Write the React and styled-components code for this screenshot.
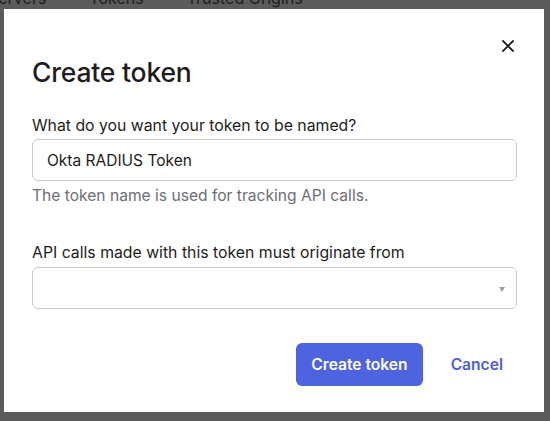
import React from "react";
import styled, { createGlobalStyle } from "styled-components";

const Global = createGlobalStyle`
  html, body { margin: 0; padding: 0; width: 550px; height: 421px; overflow: hidden; }
  body { font-family: Inter, "Noto Sans", sans-serif; background: #ffffff; }
`;

const Page = styled.div`
  position: relative;
  width: 550px;
  height: 421px;
  background: #ffffff;
  overflow: hidden;
`;

const TabRow = styled.div`
  display: flex;
  gap: 43px;
  margin-top: -12px;
  margin-left: -12px;
  font-size: 16px;
  color: #1d1d21;
`;

const Tab = styled.span``;

const Overlay = styled.div`
  position: absolute;
  inset: 0;
  background: rgba(28, 28, 28, 0.72);
  display: flex;
  align-items: flex-start;
  justify-content: flex-start;
  padding: 9px 0 0 4px;
  box-sizing: border-box;
`;

const Modal = styled.div`
  position: relative;
  width: 540px;
  height: 403px;
  background: #ffffff;
  box-sizing: border-box;
  padding: 47px 27px 0 28px;
  display: flex;
  flex-direction: column;
`;

const Close = styled.button`
  position: absolute;
  top: 29px;
  right: 28px;
  width: 16px;
  height: 16px;
  padding: 0;
  border: none;
  background: none;
  display: flex;
  align-items: center;
  justify-content: center;
`;

const Title = styled.h1`
  margin: 0;
  font-size: 26.5px;
  font-weight: 500;
  color: #1d1d21;
  line-height: 32px;
  letter-spacing: -0.2px;
`;

const Field = styled.div`
  display: flex;
  flex-direction: column;
  margin-top: ${(p) => p.$mt}px;
`;

const Label = styled.label`
  font-size: 15.8px;
  line-height: 20px;
  color: #1d1d21;
  margin-bottom: ${(p) => p.$gap}px;
`;

const Input = styled.div`
  height: 42px;
  box-sizing: border-box;
  border: 1px solid #c9c9cd;
  border-radius: 6px;
  padding: 0 14px;
  display: flex;
  align-items: center;
  font-size: 15.5px;
  color: #1d1d21;
`;

const SelectBox = styled(Input)`
  justify-content: flex-end;
  padding-right: 11px;
`;

const Caret = styled.span`
  width: 0;
  height: 0;
  border-left: 3.5px solid transparent;
  border-right: 3.5px solid transparent;
  border-top: 5px solid #a0a0a6;
  margin-top: 2px;
`;

const Help = styled.div`
  font-size: 15.6px;
  line-height: 20px;
  color: #6e6e78;
  margin-top: 5px;
`;

const Actions = styled.div`
  display: flex;
  justify-content: flex-end;
  align-items: center;
  gap: 28px;
  margin-top: 34px;
  padding-right: 14px;
`;

const Primary = styled.button`
  height: 43px;
  padding: 0 15px;
  border: none;
  border-radius: 6px;
  background: #4e63e0;
  color: #ffffff;
  font-family: Inter, sans-serif;
  font-size: 15.6px;
  font-weight: 600;
`;

const Link = styled.button`
  border: none;
  background: none;
  padding: 0;
  color: #4d5fd8;
  font-family: Inter, sans-serif;
  font-size: 15.6px;
  font-weight: 600;
`;

export default function App() {
  return (
    <>
      <Global />
      <Page>
        <TabRow>
          <Tab>Servers</Tab>
          <Tab>Tokens</Tab>
          <Tab>Trusted Origins</Tab>
        </TabRow>
        <Overlay>
          <Modal>
            <Close aria-label="Close">
              <svg width="12" height="12" viewBox="0 0 12 12">
                <path d="M1 1L11 11M11 1L1 11" stroke="#1d1d21" strokeWidth="1.8" strokeLinecap="square" />
              </svg>
            </Close>
            <Title>Create token</Title>
            <Field $mt={28}>
              <Label $gap={3}>What do you want your token to be named?</Label>
              <Input>Okta RADIUS Token</Input>
              <Help>The token name is used for tracking API calls.</Help>
            </Field>
            <Field $mt={37}>
              <Label $gap={4}>API calls made with this token must originate from</Label>
              <SelectBox>
                <Caret />
              </SelectBox>
            </Field>
            <Actions>
              <Primary>Create token</Primary>
              <Link>Cancel</Link>
            </Actions>
          </Modal>
        </Overlay>
      </Page>
    </>
  );
}
